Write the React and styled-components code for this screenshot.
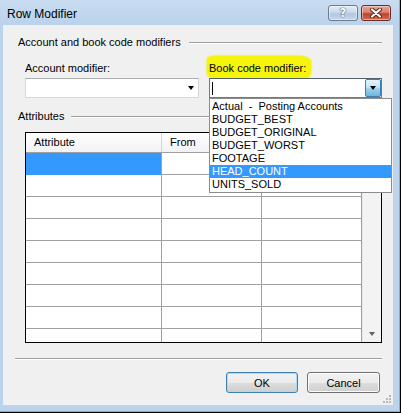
import React from "react";
import styled, { createGlobalStyle } from "styled-components";

const GlobalStyle = createGlobalStyle`
  html, body { margin: 0; padding: 0; background: #000; }
  body {
    font-family: "Liberation Sans", Arial, sans-serif;
    font-size: 11px;
    color: #000;
  }
`;

const Window = styled.div`
  width: 399px;
  height: 411px;
  display: flex;
  flex-direction: column;
  background: #bcd3ec;
  border-right: 1px solid #4cc4ea;
  border-bottom: 1px solid #4cc4ea;
`;

const TitleBar = styled.div`
  height: 25px;
  flex: none;
  display: flex;
  align-items: flex-start;
  padding: 0 8px 0 7px;
  background: linear-gradient(#c9dcf1, #bad2eb);
`;

const Title = styled.div`
  flex: 1;
  font-size: 12px;
  line-height: 14px;
  margin-top: 7px;
  color: #000;
`;

const CaptionButton = styled.div`
  width: 30px;
  height: 16px;
  margin-top: 5px;
  margin-left: ${(p) => (p.close ? "3px" : "0")};
  box-sizing: border-box;
  border: 1px solid ${(p) => (p.close ? "#6d2b25" : "#6b7c90")};
  border-radius: 3px;
  display: flex;
  align-items: center;
  justify-content: center;
  background: ${(p) =>
    p.close
      ? "linear-gradient(#e8a493 0%, #d7826d 45%, #c0452c 55%, #d06a50 100%)"
      : "linear-gradient(#e4edf7 0%, #cad9ea 45%, #b2c7de 55%, #c4d6ea 100%)"};
  box-shadow: inset 0 0 0 1px rgba(255, 255, 255, 0.45);
`;

const HelpGlyph = styled.span`
  font-family: "DejaVu Sans", sans-serif;
  font-weight: bold;
  font-size: 12px;
  line-height: 12px;
  color: #fff;
  text-shadow: 0 0 1px #4a5a6e, 0 0 1px #4a5a6e, 0 0 1px #4a5a6e;
`;

const Frame = styled.div`
  flex: 1;
  display: flex;
  padding: 0 7px 6px 3px;
`;

const Client = styled.div`
  position: relative;
  flex: 1;
  display: flex;
  flex-direction: column;
  background: #f0f0f0;
  padding: 0 11px 0 15px;
`;

const GroupHeading = styled.div`
  display: flex;
  align-items: center;
  height: 14px;
  line-height: 14px;
  margin-top: ${(p) => p.top}px;
  white-space: nowrap;
`;

const Rule = styled.div`
  flex: 1;
  height: 1px;
  margin-left: ${(p) => p.gap}px;
  background: #a0a0a0;
  box-shadow: 0 1px 0 #fff;
`;

const ComboRow = styled.div`
  display: grid;
  grid-template-columns: 174px 173px;
  column-gap: 10px;
  padding-left: 7px;
  margin-top: 12px;
`;

const Field = styled.div`
  display: flex;
  flex-direction: column;
  gap: 3px;
`;

const Label = styled.label`
  position: relative;
  z-index: 0;
  height: 14px;
  line-height: 14px;
  white-space: nowrap;
  &::before {
    content: "";
    display: ${(p) => (p.highlight ? "block" : "none")};
    position: absolute;
    z-index: -1;
    left: -2px;
    top: -5px;
    width: 104px;
    height: 23px;
    background: #f4f40c;
    border-radius: 8px 12px 6px 10px / 4px 6px 8px 6px;
    box-shadow: 0 0 1px 1px rgba(244, 244, 12, 0.6);
  }
`;

const ComboBox = styled.div`
  position: relative;
  height: 20px;
  box-sizing: border-box;
  background: #fff;
  border: 1px solid ${(p) => (p.focused ? "#6e7a88" : "#d5d7da")};
  border-top-color: ${(p) => (p.focused ? "#55606d" : "#abadb3")};
  display: flex;
  align-items: center;
`;

const Caret = styled.span`
  width: 1px;
  height: 13px;
  margin-left: 2px;
  background: #000;
`;

const Arrow = styled.span`
  width: 0;
  height: 0;
  border-left: 3.5px solid transparent;
  border-right: 3.5px solid transparent;
  border-top: 4px solid ${(p) => p.color || "#000"};
`;

const PlainArrow = styled.div`
  margin-left: auto;
  margin-right: 4px;
  display: flex;
`;

const DropButton = styled.div`
  margin-left: auto;
  width: 16px;
  height: 18px;
  box-sizing: border-box;
  border: 1px solid #3c7fb1;
  border-radius: 2px;
  display: flex;
  align-items: center;
  justify-content: center;
  background: linear-gradient(#e5f4fc 0%, #c4e5f6 45%, #98d1ef 55%, #6cb6e1 100%);
`;

const DropList = styled.ul`
  position: absolute;
  z-index: 5;
  top: 19px;
  left: -1px;
  width: 183px;
  margin: 0;
  padding: 1px 0;
  list-style: none;
  box-sizing: border-box;
  background: #fff;
  border: 1px solid #8c8c8c;
`;

const DropItem = styled.li`
  height: 13px;
  line-height: 13px;
  padding-left: 2px;
  white-space: pre;
  background: ${(p) => (p.selected ? "#3399ff" : "transparent")};
  color: ${(p) => (p.selected ? "#fff" : "#000")};
`;

const Table = styled.div`
  margin: 9px 0 0 7px;
  height: 211px;
  box-sizing: border-box;
  border: 1px solid #000;
  background: #fff;
  display: flex;
  overflow: hidden;
`;

const Grid = styled.div`
  flex: 1;
  overflow: hidden;
`;

const Row = styled.div`
  display: grid;
  grid-template-columns: 136px 100px 100px;
  height: ${(p) => (p.header ? 20 : 22)}px;
  box-sizing: border-box;
  border-bottom: 1px solid #a0a0a0;
  background: ${(p) => (p.header ? "linear-gradient(#ffffff, #f1f2f4)" : "#fff")};
`;

const Cell = styled.div`
  border-right: 1px solid ${(p) => (p.header ? "#d5d5d5" : "#a0a0a0")};
  padding-left: ${(p) => (p.header ? 8 : 0)}px;
  line-height: 19px;
  background: ${(p) => (p.selected ? "#3399ff" : "transparent")};
  margin-bottom: ${(p) => (p.selected ? "-1px" : "0")};
`;

const ScrollBar = styled.div`
  width: 18px;
  flex: none;
  background: #f3f3f3;
  border-left: 1px solid #e8e8e8;
  display: flex;
  flex-direction: column;
  justify-content: flex-end;
  align-items: center;
  padding-bottom: 6px;
`;

const Separator = styled.div`
  height: 1px;
  margin: 15px 0 0 -3px;
  background: #a0a0a0;
  box-shadow: 0 1px 0 #fff;
`;

const ButtonRow = styled.div`
  display: flex;
  justify-content: flex-end;
  gap: 9px;
  margin: 13px 2px 0 0;
`;

const Button = styled.button`
  width: ${(p) => p.w}px;
  height: 21px;
  box-sizing: border-box;
  padding: 0;
  font-family: "Liberation Sans", Arial, sans-serif;
  font-size: 11px;
  color: #000;
  border-radius: 3px;
  border: 1px solid ${(p) => (p.primary ? "#3c7fb1" : "#707070")};
  background: linear-gradient(#f2f2f2 0%, #ebebeb 50%, #dddddd 51%, #cfcfcf 100%);
  box-shadow: inset 0 0 0 1px ${(p) => (p.primary ? "#a8dcf5" : "#fcfcfc")};
`;

const Grip = styled.svg`
  position: absolute;
  right: 2px;
  bottom: 2px;
`;

const options = [
  "Actual  -  Posting Accounts",
  "BUDGET_BEST",
  "BUDGET_ORIGINAL",
  "BUDGET_WORST",
  "FOOTAGE",
  "HEAD_COUNT",
  "UNITS_SOLD",
];

export default function App() {
  const rows = Array.from({ length: 9 });
  return (
    <>
      <GlobalStyle />
      <Window>
        <TitleBar>
          <Title>Row Modifier</Title>
          <CaptionButton>
            <HelpGlyph>?</HelpGlyph>
          </CaptionButton>
          <CaptionButton close>
            <svg width="12" height="10" viewBox="0 0 12 10">
              <path d="M2 1.5 L10 8.5 M10 1.5 L2 8.5" stroke="#5a2018" strokeWidth="4" strokeLinecap="round" />
              <path d="M2 1.5 L10 8.5 M10 1.5 L2 8.5" stroke="#fff" strokeWidth="2.2" strokeLinecap="round" />
            </svg>
          </CaptionButton>
        </TitleBar>
        <Frame>
          <Client>
            <GroupHeading top={10}>
              Account and book code modifiers
              <Rule gap={8} />
            </GroupHeading>
            <ComboRow>
              <Field>
                <Label>Account modifier:</Label>
                <ComboBox>
                  <PlainArrow>
                    <Arrow />
                  </PlainArrow>
                </ComboBox>
              </Field>
              <Field>
                <Label highlight>Book code modifier:</Label>
                <ComboBox focused>
                  <Caret />
                  <DropButton>
                    <Arrow />
                  </DropButton>
                  <DropList>
                    {options.map((o) => (
                      <DropItem key={o} selected={o === "HEAD_COUNT"}>
                        {o}
                      </DropItem>
                    ))}
                  </DropList>
                </ComboBox>
              </Field>
            </ComboRow>
            <GroupHeading top={11}>
              Attributes
              <Rule gap={7} />
            </GroupHeading>
            <Table>
              <Grid>
                <Row header>
                  <Cell header>Attribute</Cell>
                  <Cell header>From</Cell>
                  <Cell header />
                </Row>
                {rows.map((_, i) => (
                  <Row key={i}>
                    <Cell selected={i === 0} />
                    <Cell />
                    <Cell />
                  </Row>
                ))}
              </Grid>
              <ScrollBar>
                <Arrow color="#606060" />
              </ScrollBar>
            </Table>
            <Separator />
            <ButtonRow>
              <Button primary w={72}>OK</Button>
              <Button w={73}>Cancel</Button>
            </ButtonRow>
            <Grip width="8" height="8" viewBox="0 0 8 8">
              {[
                [6, 0],
                [6, 3],
                [3, 3],
                [6, 6],
                [3, 6],
                [0, 6],
              ].map(([x, y]) => (
                <rect key={`${x}-${y}`} x={x} y={y} width="2" height="2" fill="#b8b8b8" />
              ))}
            </Grip>
          </Client>
        </Frame>
      </Window>
    </>
  );
}
